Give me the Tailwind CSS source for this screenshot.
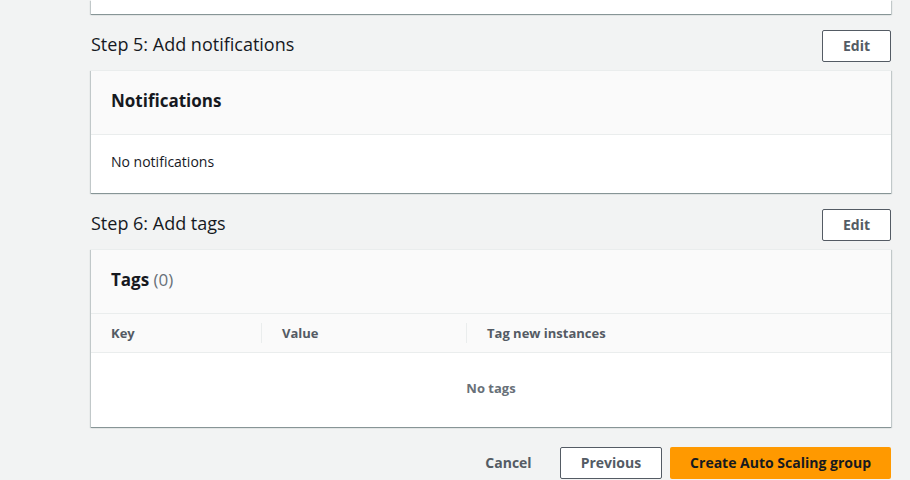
<!DOCTYPE html>
<html lang="en">
<head>
<meta charset="utf-8">
<title>Create Auto Scaling group</title>
<script src="https://cdn.jsdelivr.net/npm/@tailwindcss/browser@4"></script>
</head>
<body class="min-h-screen overflow-x-hidden bg-[#f2f3f3] font-['Open_Sans','Noto_Sans',sans-serif] text-sm leading-5 text-[#16191f]">
<main class="pl-[91px] pr-[19px]">
  <div class="h-[14px] bg-white shadow-[0_1px_0_#879596,1px_1px_1px_#001c2433,-1px_1px_1px_#001c2433]"></div>

  <section class="pt-4">
    <div class="mb-2 flex items-center justify-between">
      <h2 class="pb-1 text-lg leading-6">Step 5: Add notifications</h2>
      <button type="button" class="h-8 rounded-xs border border-[#545b64] bg-white px-5 font-bold text-[#545b64]">Edit</button>
    </div>
    <div class="border-t border-[#eaeded] bg-white shadow-[0_1px_0_#879596,1px_1px_1px_#001c2433,-1px_1px_1px_#001c2433]">
      <div class="flex h-16 items-center border-b border-[#eaeded] bg-[#fafafa] px-5 pb-1">
        <h3 class="text-[17px] leading-6 font-bold">Notifications</h3>
      </div>
      <p class="px-5 pt-[17px] pb-[21px]">No notifications</p>
    </div>
  </section>

  <section class="pt-4">
    <div class="mb-2 flex items-center justify-between">
      <h2 class="pb-1 text-lg leading-6">Step 6: Add tags</h2>
      <button type="button" class="h-8 rounded-xs border border-[#545b64] bg-white px-5 font-bold text-[#545b64]">Edit</button>
    </div>
    <div class="border-t border-[#eaeded] bg-white shadow-[0_1px_0_#879596,1px_1px_1px_#001c2433,-1px_1px_1px_#001c2433]">
      <div class="flex h-16 items-center border-b border-[#eaeded] bg-[#fafafa] px-5 pb-1">
        <h3 class="text-[17px] leading-6 font-bold">Tags <span class="font-normal text-[#687078]">(0)</span></h3>
      </div>
      <table class="w-full table-fixed border-separate border-spacing-0 text-left text-[13px]">
        <colgroup><col class="w-[171px]"><col class="w-[205px]"><col></colgroup>
        <thead class="bg-[#fafafa] text-[#545b64]">
          <tr class="h-[39px]">
            <th scope="col" class="border-b border-[#eaeded] p-0 font-bold"><div class="border-r border-[#eaeded] pl-5">Key</div></th>
            <th scope="col" class="border-b border-[#eaeded] p-0 font-bold"><div class="border-r border-[#eaeded] pl-5">Value</div></th>
            <th scope="col" class="border-b border-[#eaeded] p-0 font-bold"><div class="pl-5">Tag new instances</div></th>
          </tr>
        </thead>
        <tbody>
          <tr class="h-[74px]"><td colspan="3" class="p-0 pb-1 text-center font-bold text-[#687078]">No tags</td></tr>
        </tbody>
      </table>
    </div>
  </section>

  <footer class="flex justify-end gap-2 pt-5">
    <button type="button" class="h-8 px-5 font-bold text-[#545b64]">Cancel</button>
    <button type="button" class="h-8 rounded-xs border border-[#545b64] bg-white px-5 font-bold text-[#545b64]">Previous</button>
    <button type="submit" class="h-8 rounded-xs bg-[#ff9900] px-5 font-bold text-[#16191f]">Create Auto Scaling group</button>
  </footer>
</main>
</body>
</html>
